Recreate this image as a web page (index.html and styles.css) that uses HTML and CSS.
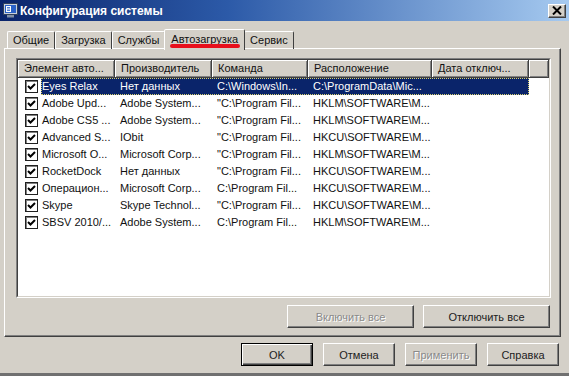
FILE: index.html
```html
<!DOCTYPE html>
<html lang="ru">
<head>
    <meta charset="UTF-8">
    <title>Конфигурация системы</title>
    <link rel="stylesheet" href="styles.css">
</head>
<body>
<div class="window">
    <!-- заголовок окна -->
    <div class="titlebar">
        <svg class="app-icon" width="15" height="15" viewBox="0 0 15 15">
            <rect x="0.5" y="0.5" width="14" height="11" fill="#c8d0dc" stroke="#30405c"/>
            <rect x="2" y="2" width="11" height="8" fill="#2a62c8"/>
            <rect x="3" y="3" width="5" height="6" fill="#fff"/>
            <path d="M4 4.5h3M4 6h3M4 7.5h3" stroke="#2a62c8" stroke-width="0.8"/>
            <rect x="4" y="12" width="7" height="2.5" fill="#8090a8"/>
        </svg>
        <span class="title">Конфигурация системы</span>
        <button class="close-btn">
            <svg width="10" height="9" viewBox="0 0 10 9"><path d="M1 0.5l8 8M9 0.5l-8 8" stroke="#000" stroke-width="2"/></svg>
        </button>
    </div>

    <!-- вкладки -->
    <div class="tabs">
        <div class="tab">Общие</div>
        <div class="tab">Загрузка</div>
        <div class="tab">Службы</div>
        <div class="tab active">Автозагрузка<span class="mark"></span></div>
        <div class="tab">Сервис</div>
    </div>

    <div class="panel">
        <div class="list">
            <div class="list-inner">
                <div class="list-head">
                    <div class="col c1">Элемент авто...</div>
                    <div class="col c2">Производитель</div>
                    <div class="col c3">Команда</div>
                    <div class="col c4">Расположение</div>
                    <div class="col c5">Дата отключ...</div>
                    <div class="col filler"></div>
                </div>

                <div class="row">
                    <span class="chk"><svg width="11" height="11" viewBox="0 0 11 11"><path d="M2 5l2.5 2.5L9 3" fill="none" stroke="#000" stroke-width="2"/></svg></span>
                    <div class="cells selected"><span>Eyes Relax</span><span>Нет данных</span><span>C:\Windows\In...</span><span>C:\ProgramData\Mic...</span><span></span></div>
                </div>
                <div class="row">
                    <span class="chk"><svg width="11" height="11" viewBox="0 0 11 11"><path d="M2 5l2.5 2.5L9 3" fill="none" stroke="#000" stroke-width="2"/></svg></span>
                    <div class="cells"><span>Adobe Upd...</span><span>Adobe System...</span><span>"C:\Program Fil...</span><span>HKLM\SOFTWARE\M...</span><span></span></div>
                </div>
                <div class="row">
                    <span class="chk"><svg width="11" height="11" viewBox="0 0 11 11"><path d="M2 5l2.5 2.5L9 3" fill="none" stroke="#000" stroke-width="2"/></svg></span>
                    <div class="cells"><span>Adobe CS5 ...</span><span>Adobe System...</span><span>"C:\Program Fil...</span><span>HKLM\SOFTWARE\M...</span><span></span></div>
                </div>
                <div class="row">
                    <span class="chk"><svg width="11" height="11" viewBox="0 0 11 11"><path d="M2 5l2.5 2.5L9 3" fill="none" stroke="#000" stroke-width="2"/></svg></span>
                    <div class="cells"><span>Advanced S...</span><span>IObit</span><span>"C:\Program Fil...</span><span>HKCU\SOFTWARE\M...</span><span></span></div>
                </div>
                <div class="row">
                    <span class="chk"><svg width="11" height="11" viewBox="0 0 11 11"><path d="M2 5l2.5 2.5L9 3" fill="none" stroke="#000" stroke-width="2"/></svg></span>
                    <div class="cells"><span>Microsoft O...</span><span>Microsoft Corp...</span><span>"C:\Program Fil...</span><span>HKLM\SOFTWARE\M...</span><span></span></div>
                </div>
                <div class="row">
                    <span class="chk"><svg width="11" height="11" viewBox="0 0 11 11"><path d="M2 5l2.5 2.5L9 3" fill="none" stroke="#000" stroke-width="2"/></svg></span>
                    <div class="cells"><span>RocketDock</span><span>Нет данных</span><span>"C:\Program Fil...</span><span>HKCU\SOFTWARE\M...</span><span></span></div>
                </div>
                <div class="row">
                    <span class="chk"><svg width="11" height="11" viewBox="0 0 11 11"><path d="M2 5l2.5 2.5L9 3" fill="none" stroke="#000" stroke-width="2"/></svg></span>
                    <div class="cells"><span>Операцион...</span><span>Microsoft Corp...</span><span>C:\Program Fil...</span><span>HKCU\SOFTWARE\M...</span><span></span></div>
                </div>
                <div class="row">
                    <span class="chk"><svg width="11" height="11" viewBox="0 0 11 11"><path d="M2 5l2.5 2.5L9 3" fill="none" stroke="#000" stroke-width="2"/></svg></span>
                    <div class="cells"><span>Skype</span><span>Skype Technol...</span><span>"C:\Program Fil...</span><span>HKCU\SOFTWARE\M...</span><span></span></div>
                </div>
                <div class="row">
                    <span class="chk"><svg width="11" height="11" viewBox="0 0 11 11"><path d="M2 5l2.5 2.5L9 3" fill="none" stroke="#000" stroke-width="2"/></svg></span>
                    <div class="cells"><span>SBSV 2010/...</span><span>Adobe System...</span><span>C:\Program Fil...</span><span>HKLM\SOFTWARE\M...</span><span></span></div>
                </div>
            </div>
        </div>

        <div class="panel-buttons">
            <button class="btn wide" disabled>Включить все</button>
            <button class="btn wide">Отключить все</button>
        </div>
    </div>

    <div class="dialog-buttons">
        <button class="btn default">OK</button>
        <button class="btn">Отмена</button>
        <button class="btn" disabled>Применить</button>
        <button class="btn">Справка</button>
    </div>
</div>
</body>
</html>
```

FILE: styles.css
```css
body {
    margin: 0;
    font-family: "Liberation Sans", Arial, sans-serif;
    font-size: 11px;
    background-color: #d4d0c8;
}
.window {
    width: 569px;
    height: 376px;
    box-sizing: border-box;
    background-color: #d4d0c8;
    border-bottom: 3px solid #707070;
    display: flex;
    flex-direction: column;
}

/* заголовок */
.titlebar {
    height: 21px;
    flex: none;
    display: flex;
    align-items: center;
    padding-left: 3px;
    background: linear-gradient(to right, #0a246a, #2c5aa8 40%, #a6caf0);
}
.app-icon {
    margin-right: 2px;
}
.title {
    color: white;
    font-weight: bold;
    font-size: 12px;
    flex: 1;
}
.close-btn {
    width: 18px;
    height: 14px;
    margin-right: 3px;
    padding: 0;
    display: flex;
    align-items: center;
    justify-content: center;
    background-color: #d4d0c8;
    border: 1px solid;
    border-color: #fff #404040 #404040 #fff;
    box-shadow: inset -1px -1px #808080;
}

/* вкладки */
.tabs {
    height: 27px;
    flex: none;
    display: flex;
    align-items: flex-end;
    padding-left: 7px;
    position: relative;
    z-index: 1;
}
.tab {
    height: 18px;
    line-height: 17px;
    padding: 0 5px;
    box-sizing: border-box;
    border: 1px solid;
    border-bottom: none;
    border-color: #fff #404040 transparent #fff;
    border-radius: 2px 2px 0 0;
    margin-bottom: -1px;
    color: #111;
}
.tab.active {
    position: relative;
    height: 21px;
    line-height: 19px;
    padding: 0 6px;
    margin: 0 -1px -2px -1px;
    background-color: #d4d0c8;
}
.mark {
    position: absolute;
    left: 5px;
    right: 4px;
    bottom: 2px;
    height: 4px;
    border-radius: 2px;
    background-color: #e8101c;
}

/* панель вкладки */
.panel {
    height: 289px;
    flex: none;
    box-sizing: border-box;
    margin-left: 4px;
    width: 557px;
    padding: 9px 9px 0 11px;
    border: 1px solid;
    border-color: #fff #404040 #404040 #fff;
    box-shadow: inset -1px -1px #808080;
}
.list {
    height: 240px;
    box-sizing: border-box;
    border: 1px solid;
    border-color: #808080 #fff #fff #808080;
}
.list-inner {
    height: 100%;
    box-sizing: border-box;
    border: 1px solid;
    border-color: #404040 #d4d0c8 #d4d0c8 #404040;
    background-color: white;
    overflow: hidden;
}
.list-head {
    display: flex;
    height: 18px;
    background-color: #d4d0c8;
}
.col {
    box-sizing: border-box;
    padding-left: 6px;
    line-height: 17px;
    white-space: nowrap;
    color: #111;
    border-right: 1px solid #404040;
    border-bottom: 1px solid #404040;
    box-shadow: inset 1px 1px #fff, inset -1px -1px #808080;
}
.c1 { width: 97px; }
.c2 { width: 97px; }
.c3 { width: 96px; }
.c4 { width: 124px; }
.c5 { width: 97px; }
.filler { flex: 1; }

.row {
    display: flex;
    height: 17px;
    color: #111;
}
.chk {
    width: 13px;
    height: 13px;
    box-sizing: border-box;
    margin: 2px 3px 0 7px;
    border: 1px solid #202020;
    box-shadow: inset 1px 1px #808080;
    background-color: white;
    display: flex;
    align-items: center;
    justify-content: center;
}
.cells {
    display: grid;
    grid-template-columns: 74px 97px 96px 124px 97px;
    line-height: 17px;
    white-space: nowrap;
    box-sizing: border-box;
}
.cells span {
    padding-left: 5px;
    overflow: hidden;
}
.cells span:first-child {
    padding-left: 1px;
}
.cells.selected {
    background-color: #0a246a;
    color: white;
    outline: 1px dotted #d8d070;
    outline-offset: -1px;
}

/* кнопки */
.btn {
    appearance: none;
    height: 23px;
    width: 72px;
    padding: 0;
    font: inherit;
    color: #222;
    background-color: #d4d0c8;
    border: 1px solid;
    border-color: #fff #404040 #404040 #fff;
    box-shadow: inset -1px -1px #808080;
}
.btn:disabled {
    color: #8a8a8a;
    text-shadow: 1px 1px #fff;
}
.btn.default {
    border-color: #000;
    box-shadow: inset 1px 1px #fff, inset -1px -1px #404040, inset -2px -2px #808080;
}
.btn.wide {
    width: 127px;
}
.panel-buttons {
    display: flex;
    justify-content: flex-end;
    gap: 9px;
    margin-top: 7px;
    padding-right: 1px;
}
.dialog-buttons {
    display: flex;
    justify-content: flex-end;
    gap: 10px;
    margin-top: 6px;
    padding-right: 10px;
}
```
